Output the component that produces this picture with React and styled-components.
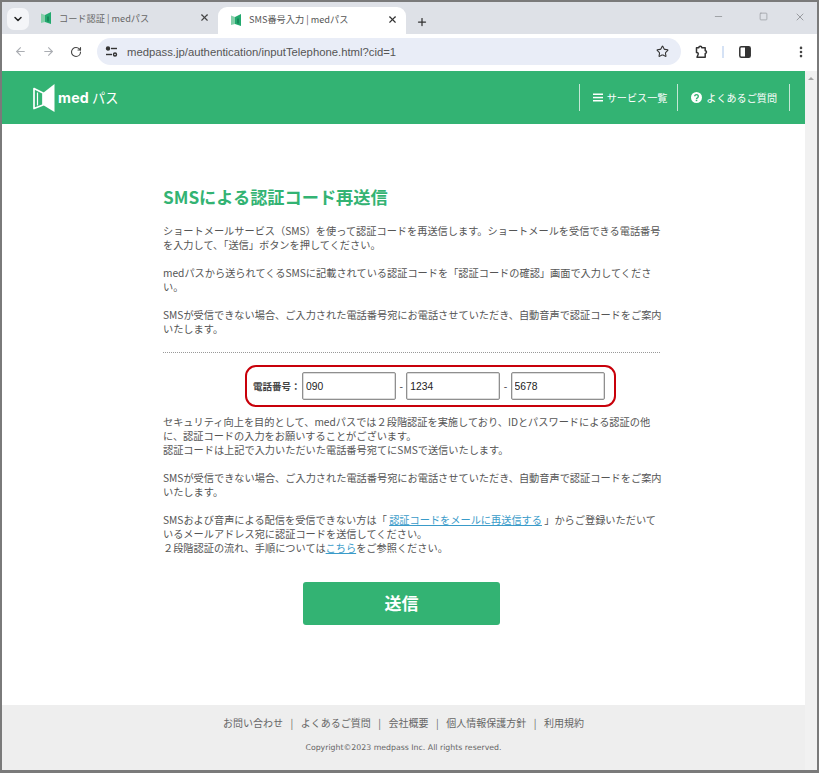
import React from "react";
import styled, { createGlobalStyle } from "styled-components";
import { ArrowLeft, ArrowRight, RotateCw, Star, MoreVertical, X, Plus, ChevronDown, Minus, Square } from "lucide-react";

const Global = createGlobalStyle`
  html, body { margin: 0; padding: 0; background: #fff; }
  * { box-sizing: border-box; }
`;
const FONT = `"Noto Sans CJK JP", "Noto Sans", sans-serif`;
const LATIN = `"DejaVu Sans", "Noto Sans CJK JP", sans-serif`;
const GREEN = "#33b373";

const Frame = styled.div`
  width: 819px; height: 773px; overflow: hidden;
  border: solid #7a7a7a; border-width: 2px 2px 3px 2px;
  display: flex; flex-direction: column; font-family: ${FONT}; color: #555;
`;
const TabStrip = styled.div`
  height: 32px; background: #dee1e7; display: flex; align-items: flex-end; padding-left: 5px; flex: none;
`;
const TabMenu = styled.div`
  width: 22px; height: 22px; margin: 0 0 4px 0; border-radius: 7px; background: #f4f5f8;
  display: flex; align-items: center; justify-content: center; color: #222; flex: none;
`;
const Tab = styled.div`
  width: 188px; height: ${p => p.$active ? 27 : 30}px; padding: 0 8px 3px ${p => p.$active ? 12 : 10}px; display: flex; align-items: center;
  background: ${p => p.$active ? "#fff" : "transparent"}; border-radius: 9px 9px 0 0;
  font-size: 9.2px; color: ${p => p.$active ? "#555" : "#666"}; gap: 7px; flex: none;
  margin-left: ${p => p.$active ? 0 : 1}px;
`;
const TabTitle = styled.span` flex: 1; white-space: nowrap; `;
const NewTab = styled.div` margin: 0 0 6px 10px; display: flex; color: #333; `;
const WindowButtons = styled.div`
  margin-left: auto; display: flex; align-items: center; gap: 26px; height: 100%; padding: 0 11px 3px 0; color: #9a9ca1;
`;
const MinimizeIcon = styled(Minus)` margin-right: 9px; `;
const Toolbar = styled.div`
  height: 37px; background: #fff; display: flex; align-items: center; padding: 0 0 2px 11px; flex: none;
`;
const NavBtn = styled.div`
  width: 14px; margin-right: ${p => p.$gap}px; display: flex; justify-content: center; color: ${p => p.$dim ? "#aaadb2" : "#444"};
`;
const Omnibox = styled.div`
  width: 584px; height: 27px; border-radius: 14px; background: #e9edf7; display: flex; align-items: center;
  padding: 0 12px 0 8px; margin-left: 14px; font-size: 11.3px; color: #555; font-family: "Liberation Sans", sans-serif;
`;
const TuneIcon = styled.svg` margin-right: 9px; flex: none; `;
const Url = styled.span` flex: 1; `;
const ToolIcons = styled.div`
  display: flex; align-items: center; margin-left: 14px; color: #444;
`;
const ToolSep = styled.div` width: 2px; height: 12px; background: #d5e2f5; margin: 0 15px 0 13px; `;
const MoreIcon = styled(MoreVertical)` margin-left: 43px; `;
const Body = styled.div` flex: 1; display: flex; min-height: 0; `;
const Page = styled.div` flex: 1; min-width: 0; display: flex; flex-direction: column; background: #fff; `;
const Scrollbar = styled.div`
  width: 12px; background: #f1f1f1; display: flex; justify-content: center; padding-top: 6px;
  &::before { content: ""; border: solid transparent; border-width: 0 3px 3px; border-bottom-color: #a3a3a3; height: 0; }
`;
const Header = styled.header`
  height: 53px; background: ${GREEN}; display: flex; align-items: center; padding: 0 15px 0 31px; flex: none; color: #fff;
`;
const Logo = styled.div` display: flex; align-items: center; color: #fff; gap: 3px; `;
const LogoMed = styled.span` font: 700 14.2px "Inter", sans-serif; letter-spacing: .2px; `;
const LogoPass = styled.span` font-size: 13.2px; `;
const HeaderNav = styled.nav` margin-left: auto; display: flex; height: 27px; border-right: 1px solid #c4e7d5; `;
const NavItem = styled.a`
  border-left: 1px solid #c4e7d5; display: flex; align-items: center; gap: 4px; padding: 0 ${p => p.$pr}px 0 13px; font-size: 10.1px; color: #fff;
  svg { flex: none; }
`;
const Main = styled.main` flex: 1; padding: 63px 0 0 161px; `;
const Column = styled.div` width: 497px; `;
const Title = styled.h1`
  margin: 0 0 17px; font-size: 17.2px; line-height: 20px; font-weight: 700; color: ${GREEN}; white-space: nowrap;
`;
const Para = styled.p`
  margin: 0 0 ${p => p.$mb ?? 14}px; font-size: 10.2px; line-height: 14px; color: #555; white-space: nowrap;
`;
const Rule = styled.hr`
  border: 0; border-top: 1px dotted #999; margin: 16px 0 12px; height: 0;
`;
const PhoneBox = styled.div`
  width: 371px; height: 42px; margin: 0 0 0 82px; border: 2px solid #c8000a; border-radius: 11px;
  display: flex; align-items: center; padding: 0 10px 0 6px;
`;
const PhoneLabel = styled.label` font-size: 9.5px; font-weight: 700; color: #444; width: 49px; white-space: nowrap; flex: none; `;
const PhoneInput = styled.input`
  width: 94px; height: 28px; border: 1px solid #8f8f8f; border-radius: 2px; padding: 0 2px 0 3px; font: 10.3px "Liberation Sans", sans-serif; color: #222; background: #fff; outline: none; flex: none;
  box-shadow: inset 0 0 0 .5px #bbb;
`;
const Dash = styled.span` width: 10.3px; text-align: center; font: 10.5px "Liberation Sans", sans-serif; color: #555; flex: none; `;
const Notes = styled.div` margin-top: 8px; `;
const TextLink = styled.a` color: #3a9bc9; text-decoration: underline; `;
const SubmitRow = styled.div` display: flex; margin: 27px 0 0 140px; `;
const Submit = styled.button`
  width: 197px; height: 43px; border: 0; border-radius: 3px; background: ${GREEN}; color: #fff; padding: 0 0 2px;
  font-family: ${FONT}; font-size: 17px; font-weight: 700;
`;
const Footer = styled.footer`
  height: 65px; background: #eeeeee; flex: none; text-align: center; padding-top: 11px;
`;
const FooterLinks = styled.div`
  display: flex; justify-content: center; font-size: 10px; line-height: 14px; color: #666;
`;
const FooterLink = styled.a`
  &:not(:last-child)::after { content: "|"; margin: 0 7.5px; }
`;
const Copyright = styled.div`
  margin-top: 12px; font: 7.8px/12px ${LATIN}; color: #666;
`;
const FavIcon = () => (
  <svg width="12" height="13" viewBox="0 0 12 13" style={{ flex: "none" }}>
    <path d="M1 2.500l4 1.500v7l-4 1z" fill="#83cfa9" />
    <path d="M5 4l6-3v12l-6-2z" fill="#22a96e" />
    <path d="M7 5.500h2v5H7z" fill="#17885a" />
  </svg>
);
const LogoMark = () => (
  <svg width="22" height="29" viewBox="0 0 22 29" fill="none">
    <path d="M1 5.500l9 4.500v12l-9 3.500z" stroke="#fff" strokeWidth="1.700" strokeLinejoin="round" />
    <path d="M4.500 9.500v13" stroke="#fff" strokeWidth="1.200" />
    <path d="M10 10L21.500 1v28L10 22z" fill="#fff" />
  </svg>
);
const Field = ({ value }) => <PhoneInput defaultValue={value} />;
const Tune = () => (
  <TuneIcon width="13" height="13" viewBox="0 0 13 13" fill="none" stroke="#333" strokeWidth="1.400">
    <circle cx="3" cy="3.500" r="1.500" fill="#333" /><path d="M6 3.500h6" />
    <circle cx="10" cy="9.500" r="1.500" /><path d="M1 9.500h6" />
  </TuneIcon>
);
const PuzzleIcon = () => (
  <svg width="14" height="14" viewBox="0 0 14 14" fill="none" stroke="#333" strokeWidth="1.500" strokeLinejoin="round">
    <path d="M1.500 2.800h2.300a1.500 1.500 0 0 1 3 0h3.400v3a1.300 1.300 0 0 1 0 2.600v3.800H2l.9-2.300a1.400 1.400 0 0 0-1.400-2.300z" />
  </svg>
);
const SidePanelIcon = () => (
  <svg width="12" height="12" viewBox="0 0 12 12">
    <rect x=".8" y=".8" width="10.400" height="10.400" rx="1.500" fill="none" stroke="#333" strokeWidth="1.500" />
    <rect x="6" y="1" width="5" height="10" fill="#333" />
  </svg>
);
const MenuIcon = () => (
  <svg width="10" height="9" viewBox="0 0 10 9" fill="#fff">
    <rect y=".5" width="10" height="1.500" /><rect y="3.800" width="10" height="1.500" /><rect y="7" width="10" height="1.500" />
  </svg>
);
const HelpIcon = () => (
  <svg width="11" height="11" viewBox="0 0 11 11">
    <circle cx="5.500" cy="5.500" r="5.500" fill="#fff" />
    <path d="M3.700 4.300a1.800 1.700 0 1 1 2.700 1.500c-.6.300-.9.600-.9 1.100" fill="none" stroke={GREEN} strokeWidth="1.400" />
    <rect x="4.700" y="7.700" width="1.600" height="1.500" fill={GREEN} />
  </svg>
);

export default function App() {
  return (
    <Frame>
      <Global />
      <TabStrip>
        <TabMenu><ChevronDown size={12} strokeWidth={3} /></TabMenu>
        <Tab>
          <FavIcon /><TabTitle>コード認証 | medパス</TabTitle><X size={11} strokeWidth={2.5} color="#444" />
        </Tab>
        <Tab $active>
          <FavIcon /><TabTitle>SMS番号入力 | medパス</TabTitle><X size={11} strokeWidth={2.5} color="#333" />
        </Tab>
        <NewTab><Plus size={12} strokeWidth={2.5} /></NewTab>
        <WindowButtons>
          <MinimizeIcon size={11} /><Square size={9} /><X size={12} />
        </WindowButtons>
      </TabStrip>
      <Toolbar>
        <NavBtn $dim $gap={14}><ArrowLeft size={13} /></NavBtn>
        <NavBtn $dim $gap={14}><ArrowRight size={13} /></NavBtn>
        <NavBtn $gap={0}><RotateCw size={12} strokeWidth={2.2} /></NavBtn>
        <Omnibox>
          <Tune />
          <Url>medpass.jp/authentication/inputTelephone.html?cid=1</Url>
          <Star size={13} strokeWidth={2} color="#333" />
        </Omnibox>
        <ToolIcons>
          <PuzzleIcon />
          <ToolSep />
          <SidePanelIcon />
          <MoreIcon size={14} strokeWidth={2.5} />
        </ToolIcons>
      </Toolbar>
      <Body>
        <Page>
          <Header>
            <Logo>
              <LogoMark />
              <LogoMed>med</LogoMed>
              <LogoPass>パス</LogoPass>
            </Logo>
            <HeaderNav>
              <NavItem $pr={10}><MenuIcon />サービス一覧</NavItem>
              <NavItem $pr={12}><HelpIcon />よくあるご質問</NavItem>
            </HeaderNav>
          </Header>
          <Main>
            <Column>
              <Title>SMSによる認証コード再送信</Title>
              <Para>ショートメールサービス（SMS）を使って認証コードを再送信します。ショートメールを受信できる電話番号<br />を入力して、「送信」ボタンを押してください。</Para>
              <Para>medパスから送られてくるSMSに記載されている認証コードを「認証コードの確認」画面で入力してくださ<br />い。</Para>
              <Para $mb={0}>SMSが受信できない場合、ご入力された電話番号宛にお電話させていただき、自動音声で認証コードをご案内<br />いたします。</Para>
              <Rule />
              <PhoneBox>
                <PhoneLabel>電話番号：</PhoneLabel>
                <Field value="090" /><Dash>-</Dash><Field value="1234" /><Dash>-</Dash><Field value="5678" />
              </PhoneBox>
              <Notes>
                <Para>セキュリティ向上を目的として、medパスでは２段階認証を実施しており、IDとパスワードによる認証の他<br />に、認証コードの入力をお願いすることがございます。<br />認証コードは上記で入力いただいた電話番号宛てにSMSで送信いたします。</Para>
                <Para>SMSが受信できない場合、ご入力された電話番号宛にお電話させていただき、自動音声で認証コードをご案内<br />いたします。</Para>
                <Para $mb={0}>SMSおよび音声による配信を受信できない方は「 <TextLink>認証コードをメールに再送信する</TextLink> 」からご登録いただいて<br />いるメールアドレス宛に認証コードを送信してください。<br />２段階認証の流れ、手順については<TextLink>こちら</TextLink>をご参照ください。</Para>
              </Notes>
              <SubmitRow><Submit>送信</Submit></SubmitRow>
            </Column>
          </Main>
          <Footer>
            <FooterLinks>
              <FooterLink>お問い合わせ</FooterLink>
              <FooterLink>よくあるご質問</FooterLink>
              <FooterLink>会社概要</FooterLink>
              <FooterLink>個人情報保護方針</FooterLink>
              <FooterLink>利用規約</FooterLink>
            </FooterLinks>
            <Copyright>Copyright©2023 medpass Inc. All rights reserved.</Copyright>
          </Footer>
        </Page>
        <Scrollbar />
      </Body>
    </Frame>
  );
}
